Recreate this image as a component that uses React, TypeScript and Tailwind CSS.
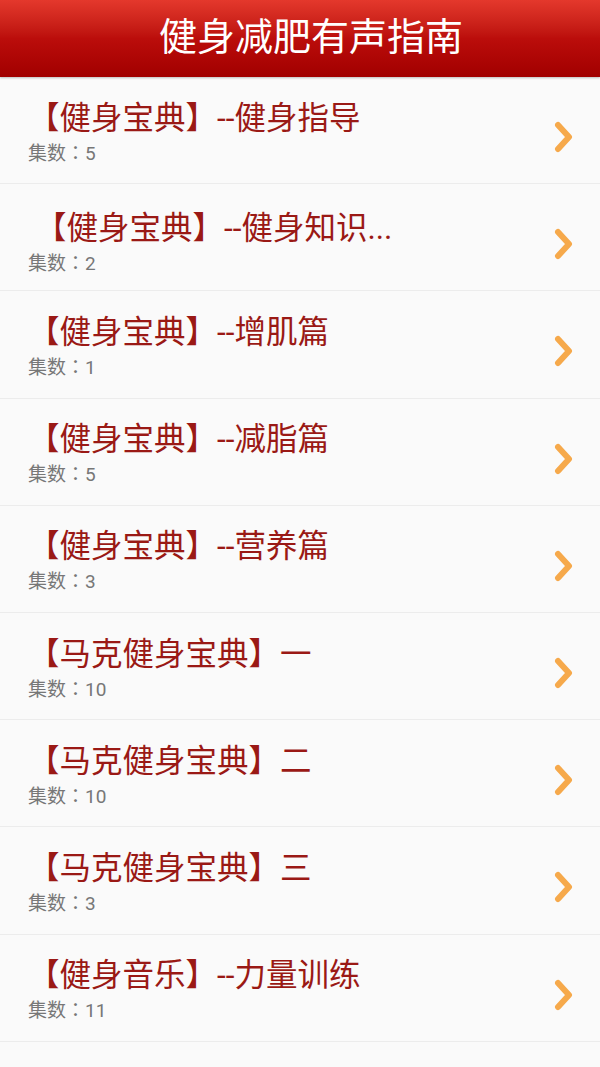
const ITEMS = [
  { title: '【健身宝典】--健身指导', count: 5 },
  { title: '【健身宝典】--健身知识...', count: 2, shift: true },
  { title: '【健身宝典】--增肌篇', count: 1 },
  { title: '【健身宝典】--减脂篇', count: 5 },
  { title: '【健身宝典】--营养篇', count: 3 },
  { title: '【马克健身宝典】一', count: 10 },
  { title: '【马克健身宝典】二', count: 10 },
  { title: '【马克健身宝典】三', count: 3 },
  { title: '【健身音乐】--力量训练', count: 11 },
];

function Chevron() {
  return (
    <svg width="24" height="32" viewBox="0 0 24 32" className="shrink-0">
      <polyline
        points="6,4 17,16 6,28"
        fill="none"
        stroke="#f6a94b"
        strokeWidth="6"
        strokeLinecap="round"
        strokeLinejoin="round"
      />
    </svg>
  );
}

export default function App() {
  return (
    <div
      className="w-[600px] h-[1067px] bg-[#fafafa] overflow-hidden"
      style={{ fontFamily: 'Roboto, "Noto Sans CJK SC", sans-serif' }}
    >
      {/* 顶部标题栏 */}
      <header className="h-[77px] flex items-center justify-center bg-gradient-to-b from-[#e4382c] via-[#bb0d0b] to-[#a10000] shadow-[0_1px_2px_rgba(0,0,0,0.25)]">
        <h1 className="text-[38px] leading-[44px] text-white pl-[22px] pb-[4px]">健身减肥有声指南</h1>
      </header>

      <ul>
        {ITEMS.map(({ title, count, shift }) => (
          <li
            key={title}
            className="h-[107.2px] flex items-center border-b border-[#ececec] pl-[28px] pr-[24px]"
          >
            <div className="flex-1 flex flex-col mt-[6px]">
              <span
                className={`block text-[31.5px] leading-[34px] text-[#9a1915] ${shift ? 'pl-[7px] pt-[6px]' : ''}`}
              >
                {title}
              </span>
              <span className="block text-[19px] leading-[22px] text-[#777777] mt-[5px]">
                集数
                <span style={{ fontFamily: '"Noto Sans CJK TC", sans-serif' }}>：</span>
                {count}
              </span>
            </div>
            <div className="mt-[14px]">
              <Chevron />
            </div>
          </li>
        ))}
      </ul>
    </div>
  );
}
